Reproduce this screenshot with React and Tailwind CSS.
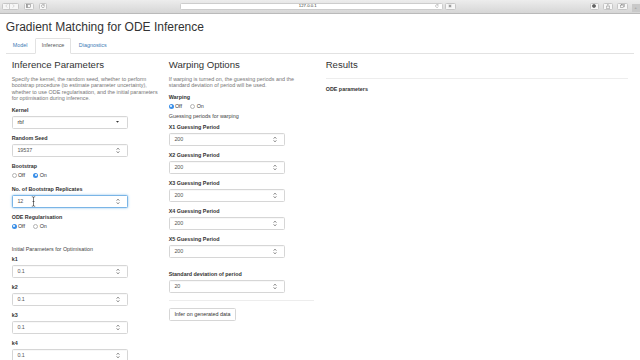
import React from "react";

function Spinner() {
  return (
    <svg width="4" height="7" viewBox="0 0 4 7" className="shrink-0">
      <path d="M0.7 2.6 L2 1.2 L3.3 2.6" fill="none" stroke="#444" strokeWidth="0.7" />
      <path d="M0.7 4.4 L2 5.8 L3.3 4.4" fill="none" stroke="#444" strokeWidth="0.7" />
    </svg>
  );
}

function NumBox({ value, focused, children }) {
  return (
    <div
      className={
        focused
          ? "relative flex h-[13.3px] w-[116px] items-center justify-between rounded-[1.5px] border border-[#7ab5e6] bg-white pl-[4.7px] pr-[6.5px] shadow-[0_0_2.5px_rgba(102,175,233,0.8)]"
          : "relative flex h-[13.3px] w-[116px] items-center justify-between rounded-[1.5px] border border-[#d6d6d6] bg-white pl-[4.7px] pr-[6.5px] shadow-[inset_0_0.5px_0.5px_rgba(0,0,0,0.06)]"
      }
    >
      <span className="text-[5.4px] leading-none text-[#555]">{value}</span>
      <Spinner />
      {children}
    </div>
  );
}

function Label({ children }) {
  return <div className="mb-[2px] text-[5.4px] font-bold leading-[7px] text-[#333]">{children}</div>;
}

function NumGroup({ label, value, focused, children }) {
  return (
    <div className="mb-[5.7px] flex flex-col">
      <Label>{label}</Label>
      <NumBox value={value} focused={focused}>
        {children}
      </NumBox>
    </div>
  );
}

function Radio({ checked, label }) {
  return (
    <div className="flex items-center">
      {checked ? (
        <span className="flex h-[5px] w-[5px] items-center justify-center rounded-full bg-[#3b8fe8]">
          <span className="h-[1.8px] w-[1.8px] rounded-full bg-white" />
        </span>
      ) : (
        <span className="h-[5px] w-[5px] rounded-full border-[0.6px] border-[#b3b3b3] bg-white" />
      )}
      <span className="ml-[1.2px] text-[5.4px] leading-[8px] text-[#333]">{label}</span>
    </div>
  );
}

function RadioGroup({ label, checked, mbClass }) {
  return (
    <div className={mbClass}>
      <div className="mb-[1.5px] text-[5.4px] font-bold leading-[7px] text-[#333]">{label}</div>
      <div className="flex h-[8px] items-center gap-[8.5px]">
        <Radio checked={checked === "Off"} label="Off" />
        <Radio checked={checked === "On"} label="On" />
      </div>
    </div>
  );
}

function H3({ children }) {
  return <h3 className="mt-[6px] text-[9.6px] font-normal leading-[10.3px] text-[#333]">{children}</h3>;
}

function Chrome() {
  return (
    <div className="flex h-[13.5px] items-center border-b border-[#bababa] bg-gradient-to-b from-[#ededed] to-[#d6d6d6]">
      <div className="ml-[2px] flex h-[6.7px] w-[16.5px] rounded-[1.5px] border-[0.5px] border-[#c6c6c6] bg-[#f7f7f7]">
        <div className="flex w-1/2 items-center justify-center border-r-[0.5px] border-[#cfcfcf]">
          <svg width="3" height="4" viewBox="0 0 3 4">
            <path d="M2.2 0.4 L0.8 2 L2.2 3.6" fill="none" stroke="#bdbdbd" strokeWidth="0.6" />
          </svg>
        </div>
        <div className="flex w-1/2 items-center justify-center">
          <svg width="3" height="4" viewBox="0 0 3 4">
            <path d="M0.8 0.4 L2.2 2 L0.8 3.6" fill="none" stroke="#bdbdbd" strokeWidth="0.6" />
          </svg>
        </div>
      </div>
      <div className="ml-[5.5px] flex h-[6.7px] w-[9.5px] items-center justify-center rounded-[1.5px] border-[0.5px] border-[#c6c6c6] bg-[#f7f7f7]">
        <svg width="5" height="4" viewBox="0 0 5 4">
          <rect x="0.3" y="0.3" width="4.4" height="3.4" fill="none" stroke="#777" strokeWidth="0.5" />
          <rect x="0.3" y="0.3" width="1.5" height="3.4" fill="#999" />
        </svg>
      </div>
      <div className="ml-[5.5px] flex h-[6.7px] w-[8px] items-center justify-center rounded-[1.5px] border-[0.5px] border-[#c6c6c6] bg-[#f7f7f7]">
        <svg width="4" height="4" viewBox="0 0 4 4">
          <path d="M3.2 1.3 A1.5 1.5 0 1 0 3.4 2.4" fill="none" stroke="#777" strokeWidth="0.5" />
          <path d="M2.4 1.3 L3.3 1.4 L3.3 0.4" fill="none" stroke="#777" strokeWidth="0.5" />
        </svg>
      </div>
      <div className="ml-[132.5px] flex h-[7px] w-[263px] items-center rounded-[1.5px] border-[0.5px] border-[#cdcdcd] bg-white">
        <div className="flex-1 text-center text-[4.3px] leading-none text-[#333]">127.0.0.1</div>
        <svg width="4" height="4" viewBox="0 0 4 4" className="mr-[2.5px]">
          <path d="M3.1 1.2 A1.4 1.4 0 1 0 3.3 2.4" fill="none" stroke="#888" strokeWidth="0.45" />
          <path d="M2.3 1.2 L3.2 1.3 L3.2 0.4" fill="none" stroke="#888" strokeWidth="0.45" />
        </svg>
      </div>
      <div className="ml-[2px] flex h-[6.7px] w-[11px] items-center justify-center rounded-[1.5px] border-[0.5px] border-[#c6c6c6] bg-[#f7f7f7]">
        <svg width="4" height="4" viewBox="0 0 4 4">
          <path d="M2 0.3 V3.7 M0.3 2 H3.7 M0.8 0.8 L3.2 3.2 M3.2 0.8 L0.8 3.2" stroke="#666" strokeWidth="0.4" />
        </svg>
      </div>
      <div className="ml-[134px] flex h-[6.7px] w-[9px] items-center justify-center rounded-[1.5px] border-[0.5px] border-[#c6c6c6] bg-[#f7f7f7]">
        <svg width="4" height="4" viewBox="0 0 4 4">
          <circle cx="2" cy="2" r="1.8" fill="#333" />
          <circle cx="2" cy="2" r="0.7" fill="#bbb" />
        </svg>
      </div>
      <div className="ml-[4px] flex h-[6.7px] w-[10px] items-center justify-center rounded-[1.5px] border-[0.5px] border-[#c6c6c6] bg-[#f7f7f7]">
        <svg width="4" height="5" viewBox="0 0 4 5">
          <path d="M1.2 2 H0.4 V4.6 H3.6 V2 H2.8" fill="none" stroke="#777" strokeWidth="0.45" />
          <path d="M2 3.2 V0.4 M1.2 1.2 L2 0.4 L2.8 1.2" fill="none" stroke="#777" strokeWidth="0.45" />
        </svg>
      </div>
      <div className="ml-[4px] flex h-[6.7px] w-[11px] items-center justify-center rounded-[1.5px] border-[0.5px] border-[#c6c6c6] bg-[#f7f7f7]">
        <svg width="5" height="4" viewBox="0 0 5 4">
          <rect x="1.3" y="0.3" width="3.3" height="2.6" fill="none" stroke="#777" strokeWidth="0.45" />
          <rect x="0.3" y="1.1" width="3.3" height="2.6" fill="#f7f7f7" stroke="#777" strokeWidth="0.45" />
        </svg>
      </div>
      <div className="ml-[4px] mt-[3px] flex h-[7.5px] flex-1 items-center justify-center bg-[#c9c9c9]">
        <span className="text-[4px] leading-none text-[#888]">+</span>
      </div>
    </div>
  );
}

export default function App() {
  return (
    <div className="h-[360px] w-[640px] overflow-hidden bg-white font-['Liberation_Sans',Arial,sans-serif] text-[#333]">
      <Chrome />
      <div className="px-[5.85px]">
        <h2 className="mb-[3.9px] mt-[7.8px] text-[12px] font-normal leading-[12.9px] text-[#333]">
          Gradient Matching for ODE Inference
        </h2>
        <div className="flex border-b border-[#e2e2e2]">
          <div className="mb-[-1px] mr-[0.8px] border border-transparent px-[5.85px] py-[3px] text-[5.4px] leading-[7.7px] text-[#3b7bb5]">
            Model
          </div>
          <div className="mb-[-1px] mr-[0.8px] rounded-t-[1.5px] border border-[#e2e2e2] border-b-white bg-white px-[5.85px] py-[3px] text-[5.4px] leading-[7.7px] text-[#555]">
            Inference
          </div>
          <div className="mb-[-1px] border border-transparent px-[5.85px] py-[3px] text-[5.4px] leading-[7.7px] text-[#3b7bb5]">
            Diagnostics
          </div>
        </div>

        <div className="flex">
          <div className="flex w-[157px] flex-col px-[5.85px]">
            <H3>Inference Parameters</H3>
            <p className="mb-[5px] mt-[5.6px] whitespace-nowrap text-[5.4px] leading-[6.5px] text-[#767676]">
              Specify the kernel, the random seed, whether to perform
              <br />
              bootstrap procedure (to estimate parameter uncertainty),
              <br />
              whether to use ODE regularisation, and the initial parameters
              <br />
              for optimisation during inference.
            </p>
            <div className="mb-[5.7px] flex flex-col">
              <Label>Kernel</Label>
              <div className="flex h-[13.3px] w-[116px] items-center justify-between rounded-[1.5px] border border-[#d6d6d6] bg-white pl-[4.7px] pr-[7.5px] shadow-[inset_0_0.5px_0.5px_rgba(0,0,0,0.06)]">
                <span className="text-[5.4px] leading-none text-[#333]">rbf</span>
                <svg width="3" height="2" viewBox="0 0 3 2">
                  <path d="M0 0 H3 L1.5 1.8 Z" fill="#333" />
                </svg>
              </div>
            </div>
            <NumGroup label="Random Seed" value="19537" />
            <RadioGroup label="Bootstrap" checked="On" mbClass="mb-[6.5px]" />
            <NumGroup label="No. of Bootstrap Replicates" value="12" focused>
              <svg width="5" height="11" viewBox="0 0 5 11" className="absolute left-[18px] top-[0px]">
                <path
                  d="M0.8 0.8 H1.8 Q2.5 0.8 2.5 1.6 Q2.5 0.8 3.2 0.8 H4.2 M2.5 1.6 V9.4 M0.8 10.2 H1.8 Q2.5 10.2 2.5 9.4 Q2.5 10.2 3.2 10.2 H4.2 M1.5 5.5 H3.5"
                  fill="none"
                  stroke="#fff"
                  strokeWidth="1.4"
                />
                <path
                  d="M0.8 0.8 H1.8 Q2.5 0.8 2.5 1.6 Q2.5 0.8 3.2 0.8 H4.2 M2.5 1.6 V9.4 M0.8 10.2 H1.8 Q2.5 10.2 2.5 9.4 Q2.5 10.2 3.2 10.2 H4.2 M1.5 5.5 H3.5"
                  fill="none"
                  stroke="#222"
                  strokeWidth="0.6"
                />
              </svg>
            </NumGroup>
            <RadioGroup label="ODE Regularisation" checked="Off" mbClass="mb-[6.5px]" />
            <div className="mb-[2.5px] mt-[9.5px] text-[5.4px] leading-[7px] text-[#444]">
              Initial Parameters for Optimisation
            </div>
            <NumGroup label="k1" value="0.1" />
            <NumGroup label="k2" value="0.1" />
            <NumGroup label="k3" value="0.1" />
            <NumGroup label="k4" value="0.1" />
          </div>

          <div className="flex w-[157px] flex-col px-[5.85px]">
            <H3>Warping Options</H3>
            <p className="mb-[5px] mt-[5.6px] whitespace-nowrap text-[5.4px] leading-[6.5px] text-[#767676]">
              If warping is turned on, the guessing periods and the
              <br />
              standard deviation of period will be used.
            </p>
            <RadioGroup label="Warping" checked="Off" mbClass="mb-[3.25px]" />
            <div className="mb-[3.7px] text-[5.4px] leading-[7px] text-[#444]">Guessing periods for warping</div>
            <NumGroup label="X1 Guessing Period" value="200" />
            <NumGroup label="X2 Guessing Period" value="200" />
            <NumGroup label="X3 Guessing Period" value="200" />
            <NumGroup label="X4 Guessing Period" value="200" />
            <NumGroup label="X5 Guessing Period" value="200" />
            <div className="mt-[6.6px] flex flex-col">
              <NumGroup label="Standard deviation of period" value="20" />
            </div>
            <div className="mb-[7.5px] mt-[1px] h-px w-full bg-[#ededed]" />
            <div className="flex h-[12.4px] w-fit items-center rounded-[1.5px] border border-[#d6d6d6] bg-white px-[4.7px] text-[5.4px] leading-none text-[#333]">
              Infer on generated data
            </div>
          </div>

          <div className="flex w-[314px] flex-col px-[5.85px]">
            <H3>Results</H3>
            <div className="mt-[7.5px] h-px w-full bg-[#ededed]" />
            <div className="mt-[7px] text-[5.4px] font-bold leading-[7px] text-[#333]">ODE parameters</div>
          </div>
        </div>
      </div>
    </div>
  );
}
